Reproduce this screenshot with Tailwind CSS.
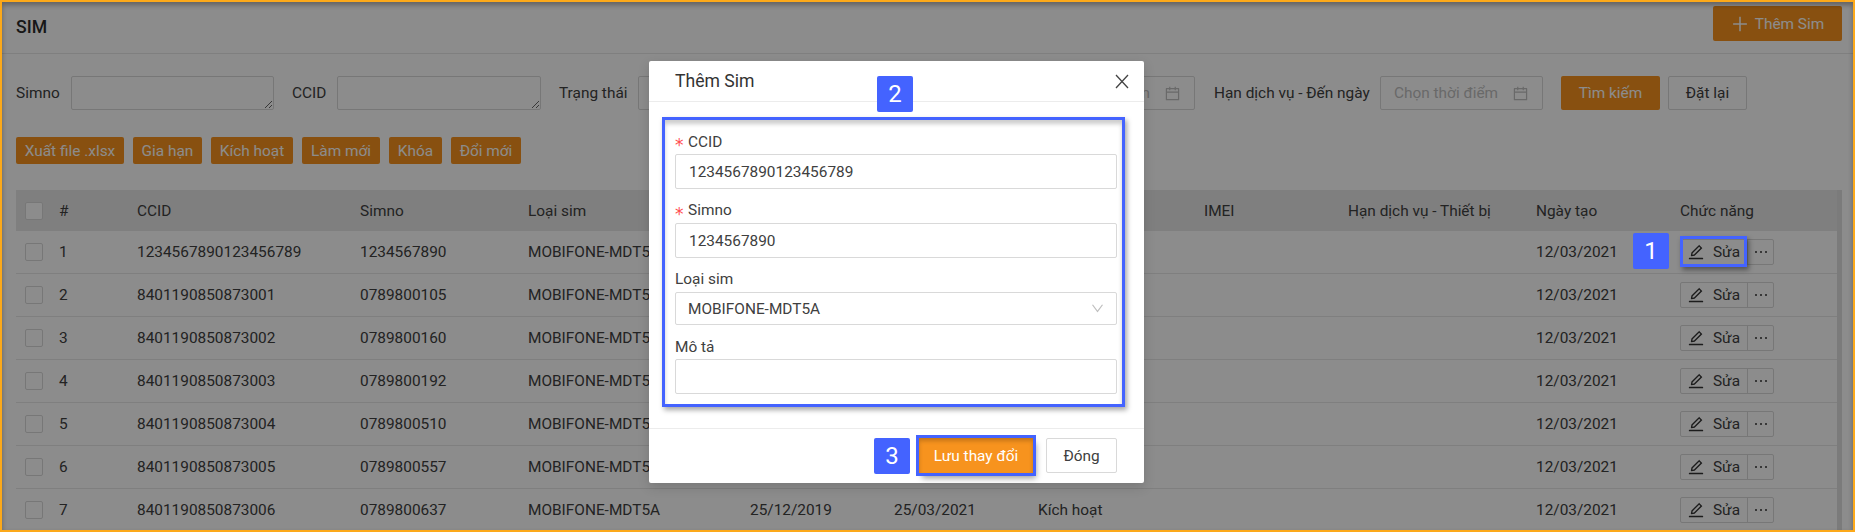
<!DOCTYPE html>
<html lang="vi">

<head>
    <meta charset="UTF-8">
    <title>SIM</title>
    <script src="https://cdn.jsdelivr.net/npm/@tailwindcss/browser@4"></script>
</head>

<body class="font-['Roboto',sans-serif] text-[15.4px] leading-[22px] text-[#404040] bg-white">
    <main class="relative h-[532px] overflow-hidden pl-[16px] bg-white">
        <header class="flex items-center justify-between h-[54px] -ml-[16px] pl-[16px] pr-[13px] border-b border-[#e8e8e8]">
            <h1 class="text-[17.6px] font-medium text-[#2b2b2b]">SIM</h1>
            <button class="flex items-center justify-center gap-[6px] w-[129px] h-[35px] mt-[-6px] rounded-[2px] bg-[#f7931e] text-white">
                <svg class="w-[18px] h-[18px]" viewBox="64 64 896 896" fill="currentColor"><path d="M482 152h60q8 0 8 8v704q0 8-8 8h-60q-8 0-8-8V160q0-8 8-8z"/><path d="M176 474h672q8 0 8 8v60q0 8-8 8H176q-8 0-8-8v-60q0-8 8-8z"/></svg>
                Thêm Sim
            </button>
        </header>

        <section class="flex items-center h-[34px] mt-[22px]">
            <label class="w-[55px]">Simno</label>
            <textarea class="w-[203px] h-[34px] border border-[#d9d9d9] rounded-[2px] bg-white"></textarea>
            <label class="w-[45px] ml-[18px]">CCID</label>
            <textarea class="w-[204px] h-[34px] border border-[#d9d9d9] rounded-[2px] bg-white"></textarea>
            <label class="w-[79px] ml-[18px]">Trạng thái</label>
            <div class="w-[172px] h-[34px] mr-[222px] border border-[#d9d9d9] rounded-[2px]"></div>
            <div class="flex items-center justify-between w-[163px] h-[34px] pl-[13px] pr-[14px] border border-[#d9d9d9] rounded-[2px] text-[#bfbfbf]">
                Chọn thời điểm
                <svg class="w-[15px] h-[15px]" viewBox="64 64 896 896" fill="currentColor"><path d="M880 184H712v-64c0-4.4-3.6-8-8-8h-56c-4.4 0-8 3.6-8 8v64H384v-64c0-4.4-3.6-8-8-8h-56c-4.4 0-8 3.6-8 8v64H144c-17.7 0-32 14.3-32 32v664c0 17.7 14.3 32 32 32h736c17.7 0 32-14.3 32-32V216c0-17.7-14.3-32-32-32zm-40 656H184V460h656v380zM184 392V256h128v48c0 4.4 3.6 8 8 8h56c4.4 0 8-3.6 8-8v-48h256v48c0 4.4 3.6 8 8 8h56c4.4 0 8-3.6 8-8v-48h128v136H184z"/></svg>
            </div>
            <label class="w-[166px] ml-[19px] whitespace-nowrap">Hạn dịch vụ - Đến ngày</label>
            <div class="flex items-center justify-between w-[163px] h-[34px] pl-[13px] pr-[14px] border border-[#d9d9d9] rounded-[2px] text-[#bfbfbf]">
                Chọn thời điểm
                <svg class="w-[15px] h-[15px]" viewBox="64 64 896 896" fill="currentColor"><path d="M880 184H712v-64c0-4.4-3.6-8-8-8h-56c-4.4 0-8 3.6-8 8v64H384v-64c0-4.4-3.6-8-8-8h-56c-4.4 0-8 3.6-8 8v64H144c-17.7 0-32 14.3-32 32v664c0 17.7 14.3 32 32 32h736c17.7 0 32-14.3 32-32V216c0-17.7-14.3-32-32-32zm-40 656H184V460h656v380zM184 392V256h128v48c0 4.4 3.6 8 8 8h56c4.4 0 8-3.6 8-8v-48h256v48c0 4.4 3.6 8 8 8h56c4.4 0 8-3.6 8-8v-48h128v136H184z"/></svg>
            </div>
            <button class="w-[99px] h-[34px] ml-[18px] rounded-[2px] bg-[#f7931e] text-white">Tìm kiếm</button>
            <button class="w-[79px] h-[34px] ml-[8px] border border-[#d9d9d9] rounded-[2px]">Đặt lại</button>
        </section>

        <section class="flex gap-[9px] mt-[27px] text-white">
            <button class="w-[108px] h-[27px] rounded-[2px] bg-[#f7931e]">Xuất file .xlsx</button>
            <button class="w-[69px] h-[27px] rounded-[2px] bg-[#f7931e]">Gia hạn</button>
            <button class="w-[82px] h-[27px] rounded-[2px] bg-[#f7931e]">Kích hoạt</button>
            <button class="w-[78px] h-[27px] rounded-[2px] bg-[#f7931e]">Làm mới</button>
            <button class="w-[53px] h-[27px] rounded-[2px] bg-[#f7931e]">Khóa</button>
            <button class="w-[70px] h-[27px] rounded-[2px] bg-[#f7931e]">Đổi mới</button>
        </section>

        <section class="w-[1821px] mt-[26px]">
            <div class="grid grid-cols-[43px_78px_223px_168px_222px_144px_144px_166px_144px_188px_144px_1fr] items-center h-[41px] bg-[#e8e8e8]">
                <span class="w-[18px] h-[18px] ml-[9px] border border-[#d9d9d9] rounded-[2px] bg-white"></span>
                <span>#</span><span>CCID</span><span>Simno</span><span>Loại sim</span><span></span><span></span><span></span><span>IMEI</span><span>Hạn dịch vụ - Thiết bị</span><span>Ngày tạo</span><span>Chức năng</span>
            </div>
            <div id="rows"></div>
        </section>

        <!-- scrollbar track -->
        <div class="absolute top-[190px] bottom-0 left-[1837px] w-[5px] bg-[#e0e0e0]"></div>

        <div class="absolute inset-0 bg-black/45"></div>

        <div class="absolute left-[649px] top-[61px] w-[495px] h-[422px] rounded-[2px] bg-white shadow-[0_4px_12px_rgba(0,0,0,0.15)]">
            <div class="flex items-center justify-between h-[41px] pl-[26px] pr-[15px] border-b border-[#ececec]">
                <h2 class="text-[17.6px] text-[#333]">Thêm Sim</h2>
                <svg class="w-[14px] h-[15px] text-[#444]" viewBox="0 0 14 15" fill="none" stroke="currentColor" stroke-width="1.3"><path d="M1 1l12 13M13 1L1 14"/></svg>
            </div>
            <form class="h-[327px] px-[26px] pt-[27px] border-b border-[#ececec]">
                <label class="flex items-center h-[25px]"><span class="w-[13px] pt-[7px] text-[#ff4d4f] font-['DejaVu_Sans',sans-serif] text-[17px]">*</span>CCID</label>
                <div class="flex items-center w-[442px] h-[35px] px-[13px] border border-[#d9d9d9] rounded-[2px]">1234567890123456789</div>
                <label class="flex items-center h-[26px] mt-[8px]"><span class="w-[13px] pt-[7px] text-[#ff4d4f] font-['DejaVu_Sans',sans-serif] text-[17px]">*</span>Simno</label>
                <div class="flex items-center w-[442px] h-[35px] px-[13px] border border-[#d9d9d9] rounded-[2px]">1234567890</div>
                <label class="flex items-center h-[26px] mt-[8px]">Loại sim</label>
                <div class="flex items-center justify-between w-[442px] h-[33px] pl-[12px] pr-[13px] border border-[#d9d9d9] rounded-[2px]">
                    MOBIFONE-MDT5A
                    <svg class="w-[13px] h-[13px] -mr-[1px] text-[#bfbfbf]" viewBox="64 64 896 896" fill="currentColor"><path d="M884 256h-75c-5.1 0-9.9 2.5-12.9 6.6L512 654.2 227.9 262.6c-3-4.1-7.8-6.6-12.9-6.6h-75c-6.5 0-10.3 7.4-6.5 12.7l352.6 486.1c12.8 17.6 39 17.6 51.7 0l352.6-486.1c3.9-5.3.1-12.7-6.4-12.7z"/></svg>
                </div>
                <label class="flex items-center h-[26px] mt-[8px] pt-[1px]">Mô tả</label>
                <div class="w-[442px] h-[35px] border border-[#d9d9d9] rounded-[2px]"></div>
            </form>
            <div class="flex items-center justify-end gap-[13px] h-[53px] pr-[27px]">
                <button class="w-[114px] h-[35px] bg-[#f7931e] text-white outline-3 outline-[#4463ff] shadow-[3px_5px_6px_rgba(0,0,0,0.4),inset_0_3px_4px_rgba(0,0,0,0.2)]">Lưu thay đổi</button>
                <button class="w-[71px] h-[35px] border border-[#d9d9d9] rounded-[2px]">Đóng</button>
            </div>
            <!-- callouts -->
            <div class="absolute left-[13px] top-[56px] w-[463px] h-[290px] border-3 border-[#4463ff] shadow-[2px_3px_5px_rgba(0,0,0,0.35),inset_0_4px_4px_rgba(0,0,0,0.2)]"></div>
            <span class="absolute left-[228px] top-[15px] flex items-center justify-center w-[36px] h-[36px] rounded-[2px] bg-[#4463ff] text-white text-[24px]">2</span>
            <span class="absolute left-[225px] top-[377px] flex items-center justify-center w-[36px] h-[36px] rounded-[2px] bg-[#4463ff] text-white text-[24px]">3</span>
        </div>

        <!-- callout 1 -->
        <span class="absolute left-[1633px] top-[233px] flex items-center justify-center w-[36px] h-[36px] rounded-[2px] bg-[#4463ff] text-white text-[24px]">1</span>
        <div class="absolute left-[1680px] top-[236px] w-[67px] h-[31px] border-3 border-[#4463ff] shadow-[2px_3px_5px_rgba(0,0,0,0.4)]"></div>

        <!-- screenshot frame -->
        <div class="absolute inset-0 border-2 border-[#fca91a] shadow-[inset_0_3px_5px_rgba(0,0,0,0.3)]"></div>
    </main>

    <script>
        const sims = [
            ['1', '1234567890123456789', '1234567890'],
            ['2', '8401190850873001', '0789800105'],
            ['3', '8401190850873002', '0789800160'],
            ['4', '8401190850873003', '0789800192'],
            ['5', '8401190850873004', '0789800510'],
            ['6', '8401190850873005', '0789800557'],
            ['7', '8401190850873006', '0789800637'],
        ]
        const editIcon = '<svg class="w-[16px] h-[16px] text-[#333]" viewBox="64 64 896 896" fill="currentColor"><path d="M257.7 752c2 0 4-.2 6-.5L431.9 722c2-.4 3.9-1.3 5.3-2.8l423.9-423.9a9.96 9.96 0 0 0 0-14.1L694.9 114.9c-1.9-1.9-4.4-2.9-7.1-2.9s-5.2 1-7.1 2.9L256.8 538.8c-1.5 1.5-2.4 3.3-2.8 5.3l-29.5 168.2a33.5 33.5 0 0 0 9.4 29.8c6.6 6.4 14.9 9.9 23.8 9.9zm67.4-174.4L687.8 215l73.3 73.3-362.7 362.6-88.9 15.7 15.6-89zM880 836H144c-17.7 0-32 14.3-32 32v36c0 4.4 3.6 8 8 8h784c4.4 0 8-3.6 8-8v-36c0-17.7-14.3-32-32-32z"/></svg>'
        // the dialog covers the middle of rows 1-6, only the last row shows its dates
        document.getElementById('rows').innerHTML = sims.map(([no, ccid, simno]) => `
            <div class="grid grid-cols-[43px_78px_223px_168px_222px_144px_144px_166px_144px_188px_144px_1fr] items-center h-[43px] border-b border-[#e8e8e8]">
                <span class="w-[18px] h-[18px] ml-[9px] border border-[#d9d9d9] rounded-[2px]"></span>
                <span>${no}</span><span>${ccid}</span><span>${simno}</span>
                ${no === '7'
                    ? '<span>MOBIFONE-MDT5A</span><span>25/12/2019</span><span>25/03/2021</span><span>Kích hoạt</span>'
                    : '<span class="w-[121px] overflow-hidden whitespace-nowrap">MOBIFONE-MDT5A</span><span></span><span></span><span></span>'}
                <span></span><span></span><span>12/03/2021</span>
                <div class="flex h-[26px] w-[94px] border border-[#d9d9d9] rounded-[2px]">
                    <button class="flex items-center justify-center gap-[9px] w-[67px] border-r border-[#d9d9d9]">${editIcon}Sửa</button>
                    <button class="flex items-center justify-center gap-[3px] flex-1"><i class="w-[2px] h-[2px] rounded-full bg-[#333]"></i><i class="w-[2px] h-[2px] rounded-full bg-[#333]"></i><i class="w-[2px] h-[2px] rounded-full bg-[#333]"></i></button>
                </div>
            </div>`).join('')
    </script>
</body>

</html>
